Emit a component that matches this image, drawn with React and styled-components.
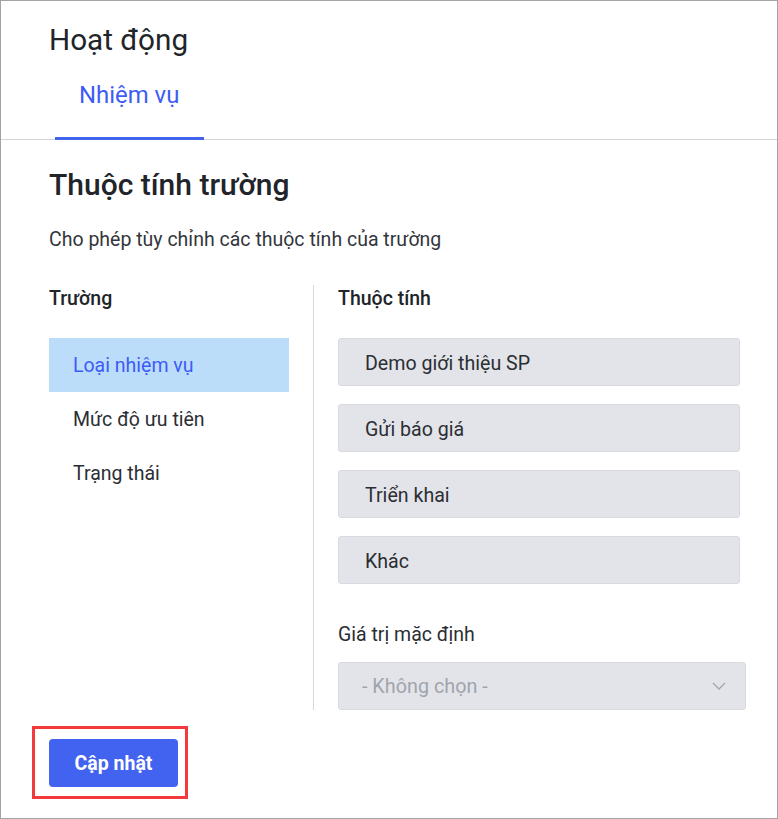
import styled, { createGlobalStyle } from "styled-components";

const GlobalStyle = createGlobalStyle`
  html, body {
    margin: 0;
    padding: 0;
    background: #ffffff;
  }

  body {
    font-family: Roboto, "Noto Sans", Arial, sans-serif;
    color: #212429;
  }

  * {
    box-sizing: border-box;
  }
`

const fields = ["Loại nhiệm vụ", "Mức độ ưu tiên", "Trạng thái"];
const options = ["Demo giới thiệu SP", "Gửi báo giá", "Triển khai", "Khác"];

export default function App() {
  return (
    <>
      <GlobalStyle />
      <Frame>
        <Header>
          <Title>Hoạt động</Title>
          <Tabs>
            <Tab active>Nhiệm vụ</Tab>
          </Tabs>
        </Header>

        <Body>
          <SectionTitle>Thuộc tính trường</SectionTitle>
          <Description>Cho phép tùy chỉnh các thuộc tính của trường</Description>

          <Columns>
            <FieldColumn>
              <ColumnTitle>Trường</ColumnTitle>
              <FieldList>
                {fields.map((f, i) => (
                  <FieldItem key={f} selected={i === 0}>{f}</FieldItem>
                ))}
              </FieldList>
            </FieldColumn>

            <PropColumn>
              <ColumnTitle>Thuộc tính</ColumnTitle>
              <OptionList>
                {options.map(o => (
                  <OptionBox key={o}>{o}</OptionBox>
                ))}
              </OptionList>
              <Label>Giá trị mặc định</Label>
              <Select>
                <span>- Không chọn -</span>
                <svg width="14" height="8" viewBox="0 0 14 8" fill="none">
                  <path d="M1 1l6 6 6-6" stroke="#a3a6ae" strokeWidth="1.3" />
                </svg>
              </Select>
            </PropColumn>
          </Columns>

          <Footer>
            <Highlight>
              <Button>Cập nhật</Button>
            </Highlight>
          </Footer>
        </Body>
      </Frame>
    </>
  );
}

const Frame = styled.div`
  width: 778px;
  height: 819px;
  border: 1px solid #a3a3a3;
  overflow: hidden;
  display: flex;
  flex-direction: column;
`

const Header = styled.div`
  border-bottom: 1px solid #d4d6db;
  padding-top: 21px;
`

const Title = styled.h1`
  margin: 0 0 0 48px;
  font-size: 29.7px;
  font-weight: 400;
  line-height: 36px;
  color: #212429;
`

const Tabs = styled.div`
  display: flex;
  margin-left: 54px;
  margin-top: 7px;
`

const Tab = styled.div`
  width: 149px;
  padding: 16px 0 0 24px;
  height: 75px;
  font-size: 23.9px;
  line-height: 28px;
  color: ${p => (p.active ? "#3d5cf5" : "#555")};
  border-bottom: 3px solid ${p => (p.active ? "#4263eb" : "transparent")};
  margin-bottom: -1px;
`

const Body = styled.div`
  padding: 28px 0 0 48px;
  flex: 1;
  display: flex;
  flex-direction: column;
`

const SectionTitle = styled.h2`
  margin: 0;
  font-size: 30px;
  font-weight: 500;
  line-height: 34px;
  color: #212429;
`

const Description = styled.p`
  margin: 25px 0 0;
  font-size: 19.5px;
  line-height: 26px;
  color: #33363c;
`

const Columns = styled.div`
  display: flex;
  margin-top: 32px;
`

const FieldColumn = styled.div`
  width: 265px;
  border-right: 1px solid #d6d8dc;
  padding-top: 2px;
`

const ColumnTitle = styled.div`
  font-size: 19.5px;
  font-weight: 500;
  line-height: 24px;
  color: #212429;
`

const FieldList = styled.div`
  margin-top: 27px;
  width: 240px;
`

const FieldItem = styled.div`
  height: 54px;
  display: flex;
  align-items: center;
  padding-left: 24px;
  padding-top: 1px;
  font-size: 19.5px;
  color: ${p => (p.selected ? "#3d5cf5" : "#2b2e33")};
  background: ${p => (p.selected ? "#bbddfa" : "transparent")};
`

const PropColumn = styled.div`
  flex: 1;
  padding: 2px 0 0 24px;
`

const OptionList = styled.div`
  display: flex;
  flex-direction: column;
  gap: 18px;
  margin-top: 27px;
  width: 402px;
`

const OptionBox = styled.div`
  height: 48px;
  display: flex;
  align-items: center;
  padding: 2px 0 0 26px;
  background: #e3e4e9;
  border: 1px solid #d9dadf;
  border-radius: 3px;
  font-size: 19.6px;
  color: #2b2e33;
`

const Label = styled.div`
  margin-top: 39px;
  font-size: 19.5px;
  line-height: 24px;
  color: #2b2e33;
`

const Select = styled.div`
  margin-top: 15px;
  width: 408px;
  height: 48px;
  display: flex;
  align-items: center;
  justify-content: space-between;
  padding: 0 19px 0 23px;
  background: #e3e4e9;
  border: 1px solid #d9dadf;
  border-radius: 3px;
  font-size: 19.8px;
  color: #a0a4ad;
`

const Footer = styled.div`
  margin-top: 16px;
  margin-left: -17px;
`

const Highlight = styled.div`
  display: inline-block;
  padding: 10px 7px 9px 14px;
  border: 3px solid #f2393c;
`

const Button = styled.button`
  display: block;
  width: 129px;
  height: 48px;
  border: none;
  border-radius: 4px;
  background: #4262f0;
  color: #ffffff;
  font-family: Roboto, "Noto Sans", Arial, sans-serif;
  font-size: 19.5px;
  font-weight: 700;
  cursor: pointer;
`
